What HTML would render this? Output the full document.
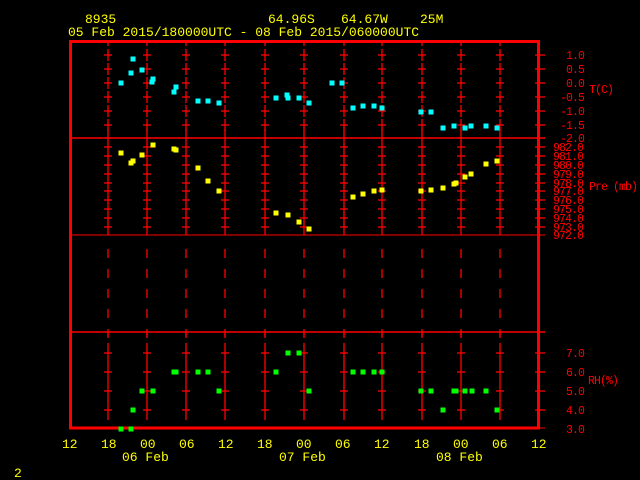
<!DOCTYPE html>
<html><head><meta charset="utf-8"><style>
html,body{margin:0;padding:0;background:#000;width:640px;height:480px;overflow:hidden}
svg{display:block}
text{font-family:"Liberation Mono",monospace}
.y{fill:#ffff00;font-size:13px}
.r{fill:#ff0000;font-size:11.5px;letter-spacing:-0.9px}
</style></head><body>
<svg id="s" width="640" height="480" xmlns="http://www.w3.org/2000/svg">
<rect width="640" height="480" fill="#000"/>
<text class="y" x="85" y="23">8935</text>
<text class="y" x="268" y="23">64.96S</text>
<text class="y" x="341" y="23">64.67W</text>
<text class="y" x="420" y="23">25M</text>
<text class="y" x="68" y="36">05 Feb 2015/180000UTC - 08 Feb 2015/060000UTC</text>
<g id="grid" stroke="#ff0000" stroke-width="1.3" fill="none"></g>
<g stroke="#ff0000" fill="none">
<rect x="70.5" y="41.5" width="468" height="386.5" stroke-width="3"/>
<line x1="70" y1="138" x2="545" y2="138" stroke-width="1.5"/>
<line x1="70" y1="235" x2="545" y2="235" stroke-width="1"/>
<line x1="70" y1="332" x2="545" y2="332" stroke-width="1.5"/>
<line x1="538" y1="428" x2="545" y2="428" stroke-width="1"/>
</g>
<g class="r">
<text x="566" y="59">1.0</text><text x="566" y="73">0.5</text><text x="566" y="87">0.0</text>
<text x="560" y="101">-0.5</text><text x="560" y="115">-1.0</text><text x="560" y="129">-1.5</text><text x="560" y="142">-2.0</text>
<text x="553" y="151">982.0</text><text x="553" y="160">981.0</text><text x="553" y="169">980.0</text>
<text x="553" y="178">979.0</text><text x="553" y="187">978.0</text><text x="553" y="195">977.0</text>
<text x="553" y="204">976.0</text><text x="553" y="213">975.0</text><text x="553" y="222">974.0</text>
<text x="553" y="231">973.0</text><text x="553" y="239">972.0</text>
<text x="566" y="357">7.0</text><text x="566" y="376">6.0</text><text x="566" y="395">5.0</text>
<text x="566" y="414">4.0</text><text x="566" y="433">3.0</text>
<text x="589" y="93">T(C)</text><text x="589" y="190">Pre (mb)</text><text x="588" y="384">RH(%)</text>
</g>
<g class="y">
<text x="62" y="448">12</text><text x="101" y="448">18</text><text x="140" y="448">00</text>
<text x="179" y="448">06</text><text x="218" y="448">12</text><text x="257" y="448">18</text>
<text x="296" y="448">00</text><text x="335" y="448">06</text><text x="374" y="448">12</text>
<text x="414" y="448">18</text><text x="453" y="448">00</text><text x="492" y="448">06</text><text x="531" y="448">12</text>
<text x="122" y="461">06 Feb</text><text x="279" y="461">07 Feb</text><text x="436" y="461">08 Feb</text>
<text x="14" y="477">2</text>
</g>
<g id="pts"></g>
</svg>
<script>
var ns="http://www.w3.org/2000/svg",g=document.getElementById('grid'),P=document.getElementById('pts');
function L(a,b,c,d){var l=document.createElementNS(ns,'line');l.setAttribute('x1',a);l.setAttribute('y1',b);l.setAttribute('x2',c);l.setAttribute('y2',d);g.appendChild(l);}
var xs=[108,147,186,225,265,304,344,382,422,461,500];
var tY=[55,69,83,97,111,125],pY=[147,156,165,174,183,191,200,209,218,227],rY=[353,372,391,410];
xs.forEach(function(x){
 tY.forEach(function(y){L(x,y-6,x,y+6);L(x-4,y,x+4,y);});
 L(x,138,x,235);pY.forEach(function(y){L(x-4,y,x+4,y);});
 L(x,42,x,46);L(x,129,x,138);
 for(var y=249;y<332;y+=20)L(x,y,x,y+9);
 L(x,332,x,337);
 rY.forEach(function(y){L(x,y-10,x,y+10);L(x-4,y,x+4,y);});
});
tY.concat(pY,rY).forEach(function(y){L(535,y,545,y);});
function S(arr,c){arr.forEach(function(p){var r=document.createElementNS(ns,'rect');r.setAttribute('x',p[0]-2.5);r.setAttribute('y',p[1]-2.5);r.setAttribute('width',5);r.setAttribute('height',5);r.setAttribute('fill',c);P.appendChild(r);});}
S([[121,83],[133,59],[131,73],[142,70],[153,79],[152,82],[176,87],[174,92],[198,101],[208,101],[219,103],[276,98],[287,95],[288,98],[299,98],[309,103],[332,83],[342,83],[353,108],[363,106],[374,106],[382,108],[421,112],[431,112],[443,128],[454,126],[465,128],[471,126],[486,126],[497,128]],'#00ffff');
S([[121,153],[131,163],[133,161],[142,155],[153,145],[174,149],[176,150],[198,168],[208,181],[219,191],[276,213],[288,215],[299,222],[309,229],[353,197],[363,194],[374,191],[382,190],[421,191],[431,190],[443,188],[454,184],[456,183],[465,177],[471,174],[486,164],[497,161]],'#ffff00');
S([[121,429],[131,429],[133,410],[142,391],[153,391],[174,372],[176,372],[198,372],[208,372],[219,391],[276,372],[288,353],[299,353],[309,391],[353,372],[363,372],[374,372],[382,372],[421,391],[431,391],[443,410],[454,391],[456,391],[465,391],[472,391],[486,391],[497,410]],'#00ff00');
</script>
</body></html>
